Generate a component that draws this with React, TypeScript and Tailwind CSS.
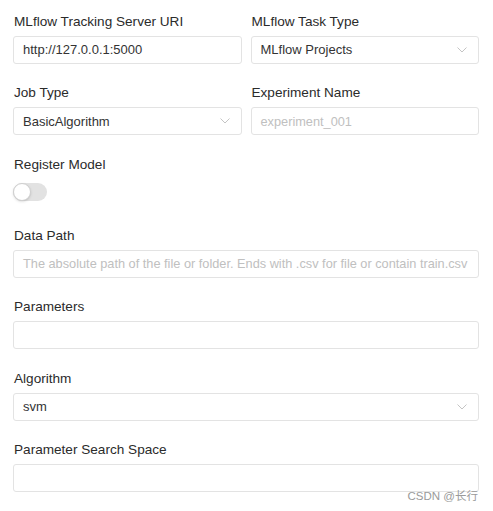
import React from 'react';

const font = { fontFamily: '"Liberation Sans", "Noto Sans CJK SC", sans-serif' };

const Chevron = () => (
  <svg width="10" height="6" viewBox="0 0 10 6" fill="none" className="shrink-0">
    <path d="M0.5 0.5 L5 5 L9.5 0.5" stroke="#c4c4c4" strokeWidth="1" />
  </svg>
);

const Label = ({ children }: { children: React.ReactNode }) => (
  <div className="h-[20px] leading-[21px] text-[13.6px] text-[#2b2b2b] mb-[5px] pl-px">{children}</div>
);

const Box = ({ value, placeholder, select }: { value?: string; placeholder?: string; select?: boolean }) => (
  <div className="h-[28px] flex items-center justify-between pl-[9px] pr-[11px] border border-[#e3e3e3] rounded-[3px] bg-white">
    {value ? (
      <span className="text-[13px] text-[#333] whitespace-nowrap">{value}</span>
    ) : (
      <span className="text-[12.75px] text-[#c0c0c0] whitespace-nowrap">{placeholder}</span>
    )}
    {select && <Chevron />}
  </div>
);

const Field = ({ label, children }: { label: string; children: React.ReactNode }) => (
  <div className="mb-[18.4px]">
    <Label>{label}</Label>
    {children}
  </div>
);

export default function App() {
  return (
    <div className="relative w-[493px] h-[511px] bg-white overflow-hidden" style={font}>
      <div className="pt-[11px] pl-[13px] pr-[14px]">
        <div className="grid grid-cols-2 gap-x-[9px]">
          <Field label="MLflow Tracking Server URI">
            <Box value="http://127.0.0.1:5000" />
          </Field>
          <Field label="MLflow Task Type">
            <Box value="MLflow Projects" select />
          </Field>
          <Field label="Job Type">
            <Box value="BasicAlgorithm" select />
          </Field>
          <Field label="Experiment Name">
            <Box placeholder="experiment_001" />
          </Field>
        </div>

        <div className="mb-[24px]">
          <div className="h-[20px] leading-[21px] text-[13.6px] text-[#2b2b2b] mb-[9px] pl-px">Register Model</div>
          <div className="w-[34px] h-[18px] rounded-full bg-[#e2e2e2] flex items-center">
            <div className="w-[18px] h-[18px] rounded-full bg-white border border-[#cfcfcf] shadow-sm" />
          </div>
        </div>

        <Field label="Data Path">
          <Box placeholder="The absolute path of the file or folder. Ends with .csv for file or contain train.csv" />
        </Field>
        <Field label="Parameters">
          <Box />
        </Field>
        <Field label="Algorithm">
          <Box value="svm" select />
        </Field>
        <Field label="Parameter Search Space">
          <Box />
        </Field>
      </div>

      <div className="absolute right-[15px] top-[488px] text-[11.5px] leading-[16px] text-[#9a9a9a]">CSDN @长行</div>
    </div>
  );
}
